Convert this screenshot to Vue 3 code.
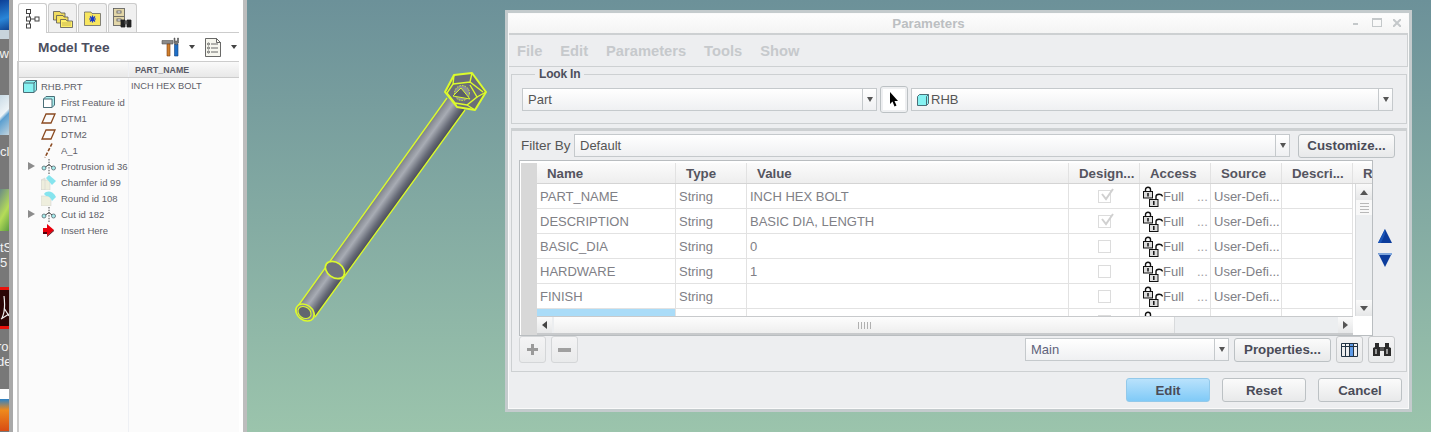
<template>
  <div class="screen">
    <div class="desktop-strip">
      <div class="d-blue"></div>
      <div class="d-pale"></div>
      <div class="d-label d-ew">ew</div>
      <div class="d-bin"></div>
      <div class="d-label d-cl">cl</div>
      <div class="d-green"></div>
      <div class="d-label">tS</div>
      <div class="d-label">5</div>
      <div class="d-acro">
        <svg width="9" height="36" viewBox="0 0 9 36"><path d="M2 28 C5 22 5 14 4 6 M4 18 L9 26 M1 29 L9 24" fill="none" stroke="#eee" stroke-width="1.2"/></svg>
      </div>
      <div class="d-label d-shift">ro</div>
      <div class="d-label d-shift">de</div>
      <div class="d-fox"></div>
    </div>
    <div class="strip-edge"></div>

    <aside class="tree-panel">
      <div class="tabs">
        <div class="tab active">
          <svg width="14" height="20" viewBox="0 0 14 20" fill="#fff" stroke="#444"><path d="M3.5 4V16M3.5 10H9" fill="none"/><rect x=".5" y=".5" width="4" height="4"/><rect x=".5" y="8" width="4" height="4"/><rect x=".5" y="15" width="4" height="4"/><rect x="9" y="8" width="4" height="4"/></svg>
        </div>
        <div class="tab">
          <svg width="20" height="20" viewBox="0 0 20 20" stroke="#555" stroke-width=".8"><path d="M.5 3.5H7L8 5H12V12H.5Z" fill="#f0dc60"/><path d="M3.5 7.5H10L11 9H15V15H3.5Z" fill="#f8e460"/><path d="M7.5 11.5H13L14 13H19.5V19.5H7.5Z" fill="#fff06a"/><path d="M9 15H18M9 17H18" stroke="#b9a64a"/></svg>
        </div>
        <div class="tab">
          <svg width="17" height="15" viewBox="0 0 17 15" stroke="#666" stroke-width=".8"><path d="M.5 2.5V1H7L8 2.5H16.5V14.5H.5Z" fill="#f8e660"/><path d="M8.5 4.5V11.5M5 8H12M6 5.5L11 10.5M11 5.5L6 10.5" stroke="#1838c8" stroke-width="1.2"/></svg>
        </div>
        <div class="tab">
          <svg width="20" height="20" viewBox="0 0 20 20" stroke="#555" stroke-width=".8"><rect x=".5" y=".5" width="11" height="17" fill="#e2d6a8"/><path d="M1 8.5H11" fill="none"/><rect x="4" y="3" width="4" height="2" fill="#fff"/><rect x="4" y="11" width="4" height="2" fill="#fff"/><path d="M8 12H12V19H8ZM14 12H18V19H14Z" fill="#222" stroke="#222"/><path d="M12 13H14V16H12Z" fill="#555"/></svg>
        </div>
      </div>
      <div class="tree-title">
        <span class="tree-title-text">Model Tree</span>
        <svg class="tool-icon" width="20" height="20" viewBox="0 0 20 20">
          <path d="M1 3.5H12V7H1Z" fill="#8a8a8a" stroke="#555" stroke-width=".6"/>
          <path d="M6 7H9V19H6Z" fill="#d0802c" stroke="#7a3a10" stroke-width=".6"/>
          <path d="M13.5 7H17V19H13.5Z" fill="#1e6fc8" stroke="#123f7a" stroke-width=".6"/>
          <path d="M13 1V6L15.3 8L17.5 6V1L16.5 1V4H14V1Z" fill="#777" stroke="#444" stroke-width=".5"/>
        </svg>
        <i class="mini-arrow first"></i>
        <svg class="list-icon" width="16" height="19" viewBox="0 0 16 19" fill="none" stroke="#444" stroke-width=".8">
          <path d="M.5.5H11.5L15.5 4.5V18.5H.5Z" fill="#f6f6ee"/>
          <path d="M11.5.5V4.5H15.5"/>
          <circle cx="3.5" cy="6" r="1"/><circle cx="3.5" cy="10" r="1"/><circle cx="3.5" cy="14" r="1"/>
          <path d="M6 6H13M6 10H13M6 14H13"/>
        </svg>
        <i class="mini-arrow last"></i>
      </div>
      <div class="tree-table">
        <div class="tree-head">
          <div class="tree-col-a"></div>
          <div class="tree-col-b">PART_NAME</div>
        </div>
        <div class="tree-body">
          <div class="tree-col-a">
            <div v-for="item in treeItems" :key="item.label" class="tree-row" :class="{ root: item.kind === 'part' }">
              <span v-if="item.kind !== 'part'" class="expander"><i v-if="item.expand"></i></span>
              <span class="tree-icon">
                <svg v-if="item.kind === 'part'" width="14" height="13" viewBox="0 0 14 13" stroke="#4a6f78"><path d="M.5 3 L3 .5H13.5V10L11 12.5H.5Z" fill="#86f2f2"/><path d="M.5 3H11V12.5M11 3L13.5 .5" fill="none"/></svg>
                <svg v-else-if="item.kind === 'first'" width="12" height="12" viewBox="0 0 12 12" stroke="#4a6f78"><path d="M.5 3 L3 .5H11.5V9L9 11.5H.5Z" fill="#a8eeee"/><path d="M.5 3H9V11.5H.5Z" fill="#fff"/></svg>
                <svg v-else-if="item.kind === 'datum'" width="15" height="11" viewBox="0 0 15 11" fill="none" stroke="#8a4a20" stroke-width="1.3"><path d="M5 1H14L10 10H1Z"/></svg>
                <svg v-else-if="item.kind === 'axis'" width="9" height="15" viewBox="0 0 9 15" fill="none" stroke="#8a4a20" stroke-width="1.6" stroke-dasharray="3.5 1.6"><path d="M8 .5L1 14.5"/></svg>
                <svg v-else-if="item.kind === 'solid'" width="16" height="15" viewBox="0 0 16 15" fill="none" stroke="#222" stroke-width=".8"><path d="M8 0V15" stroke-dasharray="1.5 1.2"/><circle cx="3" cy="9" r="2" fill="#a8eeee" stroke="#5a6a70"/><circle cx="12.5" cy="9" r="2" fill="#a8eeee" stroke="#5a6a70"/><path d="M4.5 8L8 5.5L11 8"/></svg>
                <svg v-else-if="item.kind === 'chamfer'" width="15" height="15" viewBox="0 0 15 15"><path d="M0 5L4 3V15H0Z M0 5H9V15H0Z" fill="#eeeedd" stroke="#ccc" stroke-width=".5"/><path d="M5 3L8 0L15 6L11 10Z" fill="#86e4ee"/></svg>
                <svg v-else-if="item.kind === 'round'" width="15" height="15" viewBox="0 0 15 15"><path d="M0 5H10V15H0Z" fill="#eeeedd" stroke="#ccc" stroke-width=".5"/><path d="M3 3C6 -1 12 0 15 6L11 10C10 7 8 5 5 5Z" fill="#86e4ee"/></svg>
                <svg v-else width="11" height="14" viewBox="0 0 11 14"><path d="M0 5H4V1L11 7L4 13V9H0Z" fill="#e8000c"/><path d="M4 13L11 7V8L4 14ZM0 9H4V11H0Z" fill="#55000a"/></svg>
              </span>
              <span class="tree-label">{{ item.label }}</span>
            </div>
          </div>
          <div class="tree-col-b tree-value">INCH HEX BOLT</div>
        </div>
      </div>
    </aside>
    <div class="sash"></div>

    <main class="graphics">
      <svg class="bolt" width="210" height="270" viewBox="287 60 210 270">
        <defs>
          <linearGradient id="shaft" gradientUnits="userSpaceOnUse" x1="447" y1="98" x2="464.5" y2="110.6">
            <stop offset="0" stop-color="#7c8088"/>
            <stop offset=".38" stop-color="#a8acb4"/>
            <stop offset=".75" stop-color="#666a76"/>
            <stop offset="1" stop-color="#484b56"/>
          </linearGradient>
        </defs>
        <path d="M447 98L298 306L315 317L465 110Z" fill="url(#shaft)"/>
        <path d="M447 98L298 306M465 110L315 317" stroke="#dcfb2c" stroke-width="1.3" fill="none"/>
        <ellipse cx="335" cy="270" rx="10.5" ry="7.5" transform="rotate(36 335 270)" fill="#70747e" stroke="#dcfb2c" stroke-width="1.7"/>
        <ellipse cx="305" cy="312.5" rx="10" ry="7.5" transform="rotate(36 305 312.5)" fill="#8a8e96" stroke="#dcfb2c" stroke-width="1.6"/>
        <ellipse cx="304.5" cy="312.5" rx="7" ry="5.5" transform="rotate(36 304.5 312.5)" fill="#62666f" stroke="#dcfb2c" stroke-width="1.1"/>
        <path d="M454 75L472 73L486 92L475 110L457 107L445 92Z" fill="#6a6e78" stroke="#dcfb2c" stroke-width="2" stroke-linejoin="round"/>
        <path d="M453 84L470 82L483 92M470 82L472 73M453 84L454 75M453 84L447 93L455 103L467 105L477 97L470 85" fill="none" stroke="#dcfb2c" stroke-width="1.4"/>
        <path d="M455 103L457 107M467 105L475 110M477 97L486 92" fill="none" stroke="#dcfb2c" stroke-width="1.4"/>
        <circle cx="462" cy="93" r="7.5" fill="#8b8f97" stroke="#dcfb2c" stroke-width="1" stroke-dasharray="1.5 1.2"/>
        <path d="M453 96L470 99L461 88Z" fill="#5c6069" stroke="#dcfb2c" stroke-width="1"/>
      </svg>

      <section class="dialog">
        <header class="titlebar">
          <span class="title-text">Parameters</span>
          <span class="win-controls">
            <i class="win-min"></i>
            <i class="win-max"></i>
            <svg width="8" height="8" viewBox="0 0 8 8" stroke="#c4c8ca" stroke-width="2"><path d="M0 0L8 8M8 0L0 8"/></svg>
          </span>
        </header>
        <nav class="menubar">
          <span v-for="m in menus" :key="m">{{ m }}</span>
        </nav>

        <fieldset class="look-in">
          <legend>Look In</legend>
          <div class="look-row">
            <div class="combo part-combo"><span class="combo-text">Part</span><span class="combo-arrow"><i></i></span></div>
            <button class="pick-btn">
              <svg width="10" height="15" viewBox="0 0 10 15"><path d="M1 0V12L3.5 9.5L5.5 14.5L7.5 13.5L5.5 9H9Z" fill="#000"/></svg>
            </button>
            <div class="combo grow">
              <span class="combo-text rhb">
                <svg width="12" height="12" viewBox="0 0 12 12" stroke="#4a6f78"><path d="M.5 2.5L2.5 .5H11.5V9.5L9.5 11.5H.5Z" fill="#86f2f2"/><path d="M9.5 2.5V11.5M9.5 2.5L11.5 .5" fill="none"/></svg>RHB
              </span>
              <span class="combo-arrow"><i></i></span>
            </div>
          </div>
        </fieldset>

        <div class="params">
          <div class="filter-row">
            <span class="filter-label">Filter By</span>
            <div class="combo grow"><span class="combo-text">Default</span><span class="combo-arrow"><i></i></span></div>
            <button class="btn customize">Customize...</button>
          </div>

          <div class="table-row">
            <div class="table">
              <div class="row-header"></div>
              <div class="table-main">
                <div class="thead">
                  <div v-for="c in columns" :key="c" class="th">{{ c }}</div>
                  <div class="th th-last">R</div>
                </div>
                <div class="tbody-wrap">
                  <div class="tbody">
                    <div v-for="(r, i) in rows" :key="i" class="tr">
                      <div class="td" :class="{ selected: !r.name && i === rows.length - 1 }">{{ r.name }}</div>
                      <div class="td">{{ r.type }}</div>
                      <div class="td">{{ r.value }}</div>
                      <div class="td center"><span class="check"><svg v-if="r.checked" width="16" height="14" viewBox="0 0 16 14" fill="none" stroke="#d0d0d0" stroke-width="2"><path d="M3 6L7 11L14 1"/></svg></span></div>
                      <div class="td access">
                        <svg class="locks" width="20" height="21" viewBox="0 0 20 21" fill="none" stroke="#111">
                          <path d="M2.5 6V3.5C2.5 .5 7.5 .5 7.5 3.5V6" stroke-width="1.4"/>
                          <rect x=".5" y="5.5" width="9" height="6.5" fill="#ddd"/>
                          <path d="M5 7V10.5" stroke-width="1.5"/>
                          <rect x="6.5" y="13.5" width="8.5" height="7" fill="#ddd"/>
                          <path d="M13 13V10.5C13 7.5 19 7.5 19.5 10.5" stroke-width="1.4"/>
                          <path d="M10.8 15V19" stroke-width="1.5"/>
                        </svg>
                        <span class="access-text">Full</span><span class="access-dots">...</span>
                      </div>
                      <div class="td">{{ r.source }}</div>
                      <div class="td"></div>
                    </div>
                  </div>
                  <div class="vscroll">
                    <div class="sb-btn"><i class="tri-up"></i></div>
                    <div class="v-thumb"><i></i><i></i><i></i><i></i></div>
                    <div class="v-track"></div>
                    <div class="sb-btn"><i class="tri-down"></i></div>
                  </div>
                </div>
                <div class="hscroll">
                  <div class="sb-btn h"><i class="tri-left"></i></div>
                  <div class="h-thumb"><span class="grip"><i></i><i></i><i></i><i></i><i></i></span></div>
                  <div class="h-track"></div>
                  <div class="sb-btn h"><i class="tri-right"></i></div>
                </div>
              </div>
            </div>
            <div class="move-arrows">
              <svg width="14" height="14" viewBox="0 0 14 14"><path d="M7 0L14 14H0Z" fill="#0b3c9c"/><path d="M7 0L7 5L3 14H0Z" fill="#1a55b8"/></svg>
              <svg width="14" height="14" viewBox="0 0 14 14"><path d="M0 0H14L7 14Z" fill="#0b3c9c"/><path d="M0 0H14V2H1Z" fill="#7fa6dc"/></svg>
            </div>
          </div>

          <div class="table-tools">
            <button class="icon-btn"><svg width="11" height="11" viewBox="0 0 11 11"><path d="M4 0H7V4H11V7H7V11H4V7H0V4H4Z" fill="#9a9a9a"/></svg></button>
            <button class="icon-btn"><svg width="13" height="4" viewBox="0 0 13 4"><rect width="13" height="4" fill="#a0a0a0"/></svg></button>
            <div class="spacer"></div>
            <div class="combo main-combo"><span class="combo-text">Main</span><span class="combo-arrow"><i></i></span></div>
            <button class="btn props">Properties...</button>
            <button class="icon-btn cols"><svg width="17" height="14" viewBox="0 0 17 14"><rect x="9" y="1" width="4" height="12" fill="#5d9ae8"/><path d="M.5.5H16.5V13.5H.5ZM.5 3.5H16.5M4.5 .5V13.5M8.5 .5V13.5M12.5 .5V13.5" fill="none" stroke="#234"/></svg></button>
            <button class="icon-btn find"><svg width="18" height="16" viewBox="0 0 18 16"><path d="M2 1H6V5H7V14H0V6L2 5ZM12 1H16V5L18 6V14H11V5H12Z" fill="#2a2a2a"/><path d="M7 5H11V9H7Z" fill="#555"/><path d="M2 7H4V12H2ZM13 7H15V12H13Z" fill="#999"/></svg></button>
          </div>
        </div>

        <footer class="actions">
          <button class="btn action primary">Edit</button>
          <button class="btn action">Reset</button>
          <button class="btn action">Cancel</button>
        </footer>
      </section>
    </main>
  </div>
</template>

<script setup>
const menus = ['File', 'Edit', 'Parameters', 'Tools', 'Show']

const treeItems = [
  { label: 'RHB.PRT', kind: 'part' },
  { label: 'First Feature id', kind: 'first' },
  { label: 'DTM1', kind: 'datum' },
  { label: 'DTM2', kind: 'datum' },
  { label: 'A_1', kind: 'axis' },
  { label: 'Protrusion id 36', kind: 'solid', expand: true },
  { label: 'Chamfer id 99', kind: 'chamfer' },
  { label: 'Round id 108', kind: 'round' },
  { label: 'Cut id 182', kind: 'solid', expand: true },
  { label: 'Insert Here', kind: 'insert' }
]

const columns = ['Name', 'Type', 'Value', 'Design...', 'Access', 'Source', 'Descri...']

const rows = [
  { name: 'PART_NAME', type: 'String', value: 'INCH HEX BOLT', checked: true, source: 'User-Defi...' },
  { name: 'DESCRIPTION', type: 'String', value: 'BASIC DIA, LENGTH', checked: true, source: 'User-Defi...' },
  { name: 'BASIC_DIA', type: 'String', value: '0', source: 'User-Defi...' },
  { name: 'HARDWARE', type: 'String', value: '1', source: 'User-Defi...' },
  { name: 'FINISH', type: 'String', value: '', source: 'User-Defi...' },
  { name: '', type: '', value: '', source: '' }
]
</script>

<style>
html, body { margin: 0; background: #fff; overflow: hidden; }
</style>

<style scoped>
.screen {
  display: flex;
  width: 1431px;
  height: 432px;
  overflow: hidden;
  font-family: "Liberation Sans", Arial, sans-serif;
}

/* sliver of the desktop on the far left */
.desktop-strip {
  width: 9px;
  height: 432px;
  background: #787878;
  overflow: hidden;
  flex: none;
  display: flex;
  flex-direction: column;
}
.d-blue { height: 30px; background: linear-gradient(160deg, #0d3f96, #2a86d8 60%, #12438f); flex: none; }
.d-pale { height: 9px; background: #c8d4dc; flex: none; margin-bottom: 7px; }
.d-label {
  font-size: 13px;
  line-height: 15px;
  height: 15px;
  flex: none;
  color: #f2f2f2;
  white-space: nowrap;
}
.d-shift { margin-left: -3px; }
.d-ew { margin-bottom: 34px; direction: rtl; }
.d-bin { height: 40px; flex: none; background: linear-gradient(135deg, #c9dbe6, #eef4f7 45%, #5b9fd0 55%, #c2d4de); margin-bottom: 9px; }
.d-cl { margin-bottom: 30px; }
.d-green { height: 42px; flex: none; background: linear-gradient(120deg, #6a8a86, #b5dc58 55%, #5c9c40); margin-bottom: 9px; }
.d-acro {
  height: 42px;
  flex: none;
  margin-top: 17px;
  margin-bottom: 10px;
  background: #2a0505;
  border-top: 3px solid #e8120c;
  border-bottom: 3px solid #e8120c;
  box-sizing: border-box;
}
.d-acro svg { display: block; }
.d-fox {
  height: 42px;
  flex: none;
  margin-top: 20px;
  background: linear-gradient(180deg, #fff 0 10px, #2a82c8 10px, #ef8a1c 50%, #d84c14);
}
.strip-edge {
  width: 8px;
  flex: none;
  background: linear-gradient(90deg, #a9a9a9 0 4px, #fff 4px);
}

/* model tree */
.tree-panel {
  width: 226px;
  flex: none;
  box-sizing: border-box;
  padding-right: 4px;
  display: flex;
  flex-direction: column;
  background: #fff;
}
.tabs {
  display: flex;
  height: 33px;
  padding-top: 3px;
  box-sizing: border-box;
  border-bottom: 1px solid #ccc;
  margin-left: 1px;
  gap: 1px;
}
.tab {
  width: 29px;
  height: 29px;
  display: flex;
  align-items: center;
  justify-content: center;
  background: #f0f0f0;
  border: 1px solid #ccc;
  border-bottom: none;
  box-sizing: border-box;
  border-radius: 3px 3px 0 0;
}
.tab.active { background: #fff; height: 30px; position: relative; z-index: 1; }
.tree-title {
  height: 28px;
  display: flex;
  align-items: center;
  border-left: 1px solid #ccc;
  box-sizing: border-box;
  margin-left: 1px;
}
.tree-title-text {
  font-size: 13.7px;
  font-weight: bold;
  color: #4c4f60;
  margin-left: 19px;
  width: 123px;
}
.mini-arrow {
  width: 0;
  height: 0;
  border-left: 3px solid transparent;
  border-right: 3px solid transparent;
  border-top: 4px solid #444;
  margin-left: 8px;
}
.mini-arrow.first { margin-right: 10px; }
.mini-arrow.last { margin-left: 10px; }
.tree-table {
  flex: 1;
  display: flex;
  flex-direction: column;
  border-top: 1px solid #ccc;
  border-left: 2px solid #ccc;
  background: #fbfbfb;
}
.tree-head {
  display: flex;
  height: 16px;
  box-sizing: border-box;
  background: linear-gradient(180deg, #fafafa, #e8e8e8);
  border-bottom: 1px solid #ccc;
  font-size: 8.8px;
  font-weight: bold;
  color: #5a5a66;
  line-height: 16px;
}
.tree-col-a {
  width: 109px;
  flex: none;
  border-right: 1px solid #eef0f4;
}
.tree-col-b { flex: 1; padding-left: 6px; white-space: nowrap; }
.tree-body { flex: 1; display: flex; }
.tree-value { font-size: 9.3px; line-height: 16px; color: #5e5e68; padding-left: 2px; }
.tree-row {
  height: 16px;
  display: flex;
  align-items: center;
  font-size: 9.5px;
  color: #5e5e68;
  white-space: nowrap;
}
.tree-row.root { padding-left: 4px; gap: 4px; }
.tree-row.root .tree-icon { width: 14px; }
.expander { width: 17px; padding-left: 9px; box-sizing: border-box; flex: none; display: flex; }
.expander i {
  border-left: 7px solid #8c8c8c;
  border-top: 4px solid transparent;
  border-bottom: 4px solid transparent;
}
.tree-icon { width: 25px; flex: none; display: flex; align-items: center; justify-content: center; height: 16px; }
.tree-icon svg { display: block; }
.tree-label { overflow: hidden; }
.sash {
  width: 4px;
  flex: none;
  background: #bdbdbd;
}

/* graphics window */
.graphics {
  flex: 1;
  position: relative;
  background: linear-gradient(180deg, #6c9199, #9bc4ac);
}
.bolt { position: absolute; left: 40px; top: 60px; }
.dialog {
  position: absolute;
  left: 258px;
  top: 10px;
  width: 907px;
  height: 402px;
  box-sizing: border-box;
  border: 3px solid #c4cbcd;
  background: #edeef0;
  display: flex;
  flex-direction: column;
  box-shadow: inset 0 0 0 1px #fafafa;
  font-size: 13px;
  color: #555;
}
.titlebar {
  height: 21px;
  flex: none;
  box-sizing: border-box;
  background: linear-gradient(180deg, #fdfdfd, #f4f4f4);
  border-bottom: 2px solid #cdd0d2;
  margin: 1px 1px 0;
  display: flex;
  align-items: center;
  justify-content: center;
  position: relative;
  padding-right: 60px;
}
.title-text { font-size: 13.3px; font-weight: bold; color: #bcbfc2; }
.win-controls {
  position: absolute;
  right: 7px;
  top: 4px;
  display: flex;
  align-items: center;
  gap: 11px;
}
.win-min { width: 5px; height: 2px; background: #c4c8ca; margin-top: 3px; margin-right: 3px; }
.win-max { width: 8px; height: 6px; border: 1px solid #c4c8ca; border-top-width: 2px; }
.menubar {
  height: 32px;
  flex: none;
  box-sizing: border-box;
  margin: 0 1px;
  border-bottom: 1px solid #cdd0d2;
  border-right: 1px solid #cdd0d2;
  display: flex;
  align-items: center;
  gap: 18px;
  padding-left: 8px;
  font-size: 14.7px;
  font-weight: bold;
  color: #c6c9cc;
}
.look-in {
  margin: 0 2px 0 3px;
  padding: 5px 13px 10px 10px;
  border: 1px solid #cdd0d2;
  min-width: 0;
  flex: none;
}
.look-in legend {
  margin-left: 13px;
  padding: 0 4px;
  font-size: 12px;
  letter-spacing: -.2px;
  font-weight: bold;
  line-height: 14px;
  color: #4c4f5c;
}
.look-row { display: flex; align-items: center; gap: 3px; height: 27px; }
.combo {
  height: 23px;
  box-sizing: border-box;
  display: flex;
  align-items: center;
  border: 1px solid #c5c9cc;
  background: linear-gradient(180deg, #fff, #eff0f2);
  font-size: 13px;
  color: #555;
}
.combo-text { flex: 1; padding-left: 5px; display: flex; align-items: center; }
.combo-arrow {
  width: 13px;
  height: 100%;
  flex: none;
  display: flex;
  align-items: center;
  justify-content: center;
  border-left: 1px solid #c5c9cc;
}
.combo-arrow i {
  border-left: 3.5px solid transparent;
  border-right: 3.5px solid transparent;
  border-top: 5px solid #555;
}
.part-combo { width: 355px; }
.grow { flex: 1; }
.rhb svg { margin-right: 2px; }
.pick-btn {
  width: 28px;
  height: 27px;
  padding: 0;
  border: 1px solid #bcc1c4;
  border-radius: 3px;
  background: #fff;
  box-shadow: inset 0 0 0 2px #eeeff1;
  display: flex;
  align-items: center;
  justify-content: center;
}
.params {
  margin: 4px 2px 0 3px;
  height: 244px;
  flex: none;
  box-sizing: border-box;
  border: 1px solid #cdd0d2;
  border-top: 3px solid #cdd0d2;
  display: flex;
  flex-direction: column;
  padding: 3px 11px 0 7px;
}
.filter-row { display: flex; align-items: center; gap: 3px; height: 23px; flex: none; }
.filter-label { padding-left: 2px; width: 50px; font-size: 13.5px; flex: none; color: #555; }
.btn {
  font-family: inherit;
  font-size: 13.3px;
  font-weight: bold;
  color: #4a4c58;
  border: 1px solid #bcc1c4;
  border-radius: 3px;
  background: linear-gradient(180deg, #fbfbfb, #e8e9ea);
  padding: 0;
}
.customize { width: 97px; height: 24px; margin-left: 5px; }
.table-row { display: flex; margin-top: 3px; flex: none; }
.table {
  width: 854px;
  height: 176px;
  box-sizing: border-box;
  border: 1px solid #b9bdc0;
  padding: 2px 0 0 1px;
  background: #fff;
  display: flex;
  flex: none;
  overflow: hidden;
}
.row-header { width: 16px; flex: none; background: #d8d8d8; }
.table-main { flex: 1; min-width: 0; display: flex; flex-direction: column; }
.thead {
  display: flex;
  height: 21px;
  flex: none;
  background: linear-gradient(180deg, #fbfbfb, #eeeeee);
  border-bottom: 1px solid #d4d4d4;
  box-sizing: border-box;
  font-size: 13.3px;
  font-weight: bold;
  color: #55555f;
  overflow: hidden;
}
.th {
  box-sizing: border-box;
  border-right: 1px solid #e2e2e2;
  display: flex;
  align-items: center;
  padding-left: 10px;
  flex: none;
  width: 71px;
  white-space: nowrap;
}
.th:nth-child(1) { width: 139px; }
.th:nth-child(3) { width: 322px; }
.th-last { border-right: none; width: 19px; }
.tbody-wrap { display: flex; height: 132px; flex: none; }
.tbody { width: 816px; flex: none; height: 132px; overflow: hidden; }
.tr { display: flex; height: 25px; }
.td {
  box-sizing: border-box;
  width: 71px;
  height: 25px;
  flex: none;
  border-right: 1px solid #e2e2e2;
  border-bottom: 1px solid #e2e2e2;
  padding: 0 3px;
  display: flex;
  align-items: center;
  font-size: 13px;
  color: #808086;
  white-space: nowrap;
  overflow: hidden;
}
.td:nth-child(1) { width: 139px; }
.td:nth-child(3) { width: 322px; }
.td.selected { background: #aadcf8; }
.td.center { justify-content: center; }
.check {
  width: 13px;
  height: 13px;
  box-sizing: border-box;
  border: 1px solid #dcdcdc;
  display: block;
  position: relative;
}
.check svg { position: absolute; left: 0; top: -3px; }
.td.access { padding: 0 0 0 3px; align-items: flex-start; padding-top: 1px; }
.locks { flex: none; margin-top: 1px; }
.access-text { margin-top: 4px; color: #808086; width: 34px; }
.access-dots { margin-top: 4px; color: #a0a0a6; }
.vscroll {
  width: 17px;
  margin-left: 2px;
  background: #eceef0;
  display: flex;
  flex-direction: column;
  flex: none;
  border-left: 1px solid #d8dadc;
  box-sizing: border-box;
}
.sb-btn {
  height: 16px;
  flex: none;
  background: linear-gradient(180deg, #fafafa, #e6e7e8);
  display: flex;
  align-items: center;
  justify-content: center;
}
.sb-btn.h { width: 15px; height: auto; }
.tri-up { border-left: 4px solid transparent; border-right: 4px solid transparent; border-bottom: 5px solid #555; }
.tri-down { border-left: 4px solid transparent; border-right: 4px solid transparent; border-top: 5px solid #555; }
.tri-left { border-top: 4px solid transparent; border-bottom: 4px solid transparent; border-right: 5px solid #444; }
.tri-right { border-top: 4px solid transparent; border-bottom: 4px solid transparent; border-left: 5px solid #555; }
.v-thumb {
  height: 15px;
  background: #f8f8f8;
  display: flex;
  flex-direction: column;
  align-items: center;
  justify-content: center;
  gap: 2px;
  flex: none;
}
.v-thumb i { width: 9px; height: 1px; background: #b8b8b8; }
.v-track { flex: 1; }
.hscroll {
  display: flex;
  width: 816px;
  height: 19px;
  flex: none;
  background: #eceef0;
  border-top: 1px solid #c8cacc;
  border-bottom: 2px solid #c8cacc;
  box-sizing: border-box;
}
.h-thumb {
  width: 620px;
  margin-left: 2px;
  flex: none;
  background: linear-gradient(180deg, #fdfdfd, #eeeeee);
  display: flex;
  align-items: center;
  justify-content: center;
  border-right: 1px solid #d8dadc;
}
.grip { display: flex; gap: 2px; }
.grip i { width: 1px; height: 7px; background: #b0b0b0; }
.h-track { flex: 1; }
.move-arrows {
  flex: 1;
  display: flex;
  flex-direction: column;
  align-items: center;
  justify-content: center;
  gap: 10px;
  padding-left: 2px;
}
.move-arrows svg { display: block; }
.table-tools { display: flex; align-items: center; height: 29px; box-sizing: border-box; padding-bottom: 2px; flex: none; gap: 5px; }
.icon-btn {
  width: 27px;
  height: 27px;
  padding: 0;
  border: 1px solid #d4d6d8;
  border-radius: 3px;
  background: linear-gradient(180deg, #f4f4f5, #e9eaeb);
  display: flex;
  align-items: center;
  justify-content: center;
}
.icon-btn.cols, .icon-btn.find { border-color: #c8cacc; }
.spacer { flex: 1; }
.main-combo { width: 204px; color: #60627a; }
.props { width: 97px; height: 24px; }
.actions {
  flex: 1;
  display: flex;
  justify-content: flex-end;
  gap: 12px;
  padding: 6px 7px 0 0;
}
.action { width: 84px; height: 24px; }
.primary {
  background: linear-gradient(180deg, #b9e2fc, #80caf7);
  border-color: #93c9ea;
}
</style>
